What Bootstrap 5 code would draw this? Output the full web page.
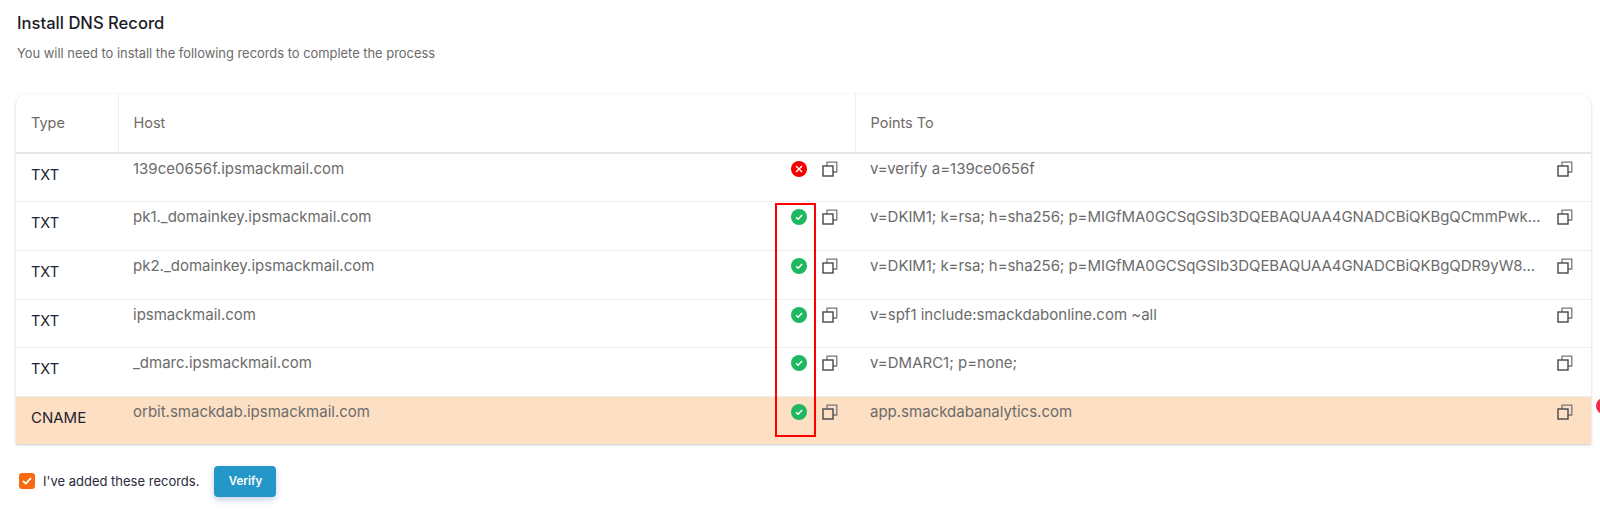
<!DOCTYPE html>
<html lang="en">
<head>
<meta charset="utf-8">
<title>Install DNS Record</title>
<link href="https://cdn.jsdelivr.net/npm/bootstrap@5.3.0/dist/css/bootstrap.min.css" rel="stylesheet">
<style>
html,body{height:525px;overflow:hidden;background:#fff}
body{font-family:"Inter","Liberation Sans",sans-serif;position:relative}
.dns-page{padding:13px 9px 0 16px}
.dns-title{font-size:16.6px;font-weight:500;color:#1b1b28;line-height:20px;margin:0 0 12px 1px}
.dns-sub{font-size:12.9px;color:#6b6b6b;line-height:18px;margin:0 0 31px 1px}
.dns-box{border-radius:12px 12px 0 0;box-shadow:0 1px 3px rgba(0,0,0,.22);overflow:hidden;background:#fff}
.dns-table{table-layout:fixed;margin:0;width:100%;font-size:14.5px}
.dns-table th{height:59px;font-weight:400;color:#6f6a66;padding:0 15px;vertical-align:middle;border-bottom:2px solid #e6e6e6;border-right:1px solid #eee}
.dns-table th:last-child{border-right:0}
.dns-table td{height:48.7px;padding:0 17px 0 15px;vertical-align:top;border-bottom:1px solid #eee;background:transparent;box-shadow:none}
.dns-table td:last-child{padding-right:18px}
.dns-type{color:#23232f;padding-top:10px!important}
.dns-cellin{display:flex;align-items:flex-start;height:100%;padding-top:5px}
.dns-val{flex:1 1 auto;min-width:0;color:#6b6b6b;white-space:nowrap;font-size:15px;line-height:20px}
.dns-long{letter-spacing:-.07px}
.dns-status{flex:none;width:16px;height:16px;margin:2px 15px 0 0}
.dns-copy{flex:none;width:16px;height:16px;margin-top:2px;color:#55555c}
.dns-copy2{margin-left:15px}
.dns-table .dns-hl td{background:#fddfc4;border-bottom:0;height:47.5px}
.dns-hl{--bs-table-bg:#fddfc4}
.dns-cname{font-size:15px}
.dns-foot{margin-top:22px;padding-left:3px;font-size:13px;color:#2a2a3a}
.dns-check{width:16px;height:16px;border-radius:3px;background:#f96a10;display:flex;align-items:center;justify-content:center}
.dns-btn{font-size:11.5px;font-weight:600;background:#2397c7;border:0;color:#fff;padding:0;width:62px;height:31px;border-radius:4px;box-shadow:0 3px 6px rgba(35,80,160,.25);margin-left:15px}
.dns-mark{position:absolute;left:775px;top:203px;width:41px;height:234px;border:2px solid #f00;pointer-events:none}
.dns-dot{position:absolute;left:1596px;top:398px;width:16px;height:16px;border-radius:50%;background:#ef2950}
</style>
</head>
<body>
<svg width="0" height="0" class="position-absolute">
<defs>
<symbol id="ic-copy" viewBox="0 0 16 16"><path d="M5 5V1.2h9.8V11H11" fill="none" stroke="#77777c" stroke-width="1.3"/><rect x="1" y="5" width="10" height="10" fill="none" stroke="#47474d" stroke-width="1.4"/></symbol>
<symbol id="ic-ok" viewBox="0 0 16 16"><circle cx="8" cy="8" r="8" fill="#1fb860"/><path d="M5 8.3l2.1 2 4-4.2" fill="none" stroke="#fff" stroke-width="1.5"/></symbol>
<symbol id="ic-bad" viewBox="0 0 16 16"><circle cx="8" cy="8" r="8" fill="#f40000"/><path d="M5 5l6 6M11 5l-6 6" fill="none" stroke="#fff" stroke-width="1.4"/></symbol>
</defs>
</svg>
<div class="dns-page">
<h1 class="dns-title">Install DNS Record</h1>
<p class="dns-sub">You will need to install the following records to complete the process</p>
<div class="dns-box">
<table class="table dns-table">
<colgroup><col style="width:102px"><col style="width:737px"><col></colgroup>
<thead><tr><th>Type</th><th>Host</th><th>Points To</th></tr></thead>
<tbody>
<tr><td class="dns-type">TXT</td><td><div class="dns-cellin"><span class="dns-val">139ce0656f.ipsmackmail.com</span><svg class="dns-status"><use href="#ic-bad"/></svg><svg class="dns-copy"><use href="#ic-copy"/></svg></div></td><td><div class="dns-cellin"><span class="dns-val">v=verify a=139ce0656f</span><svg class="dns-copy dns-copy2"><use href="#ic-copy"/></svg></div></td></tr>
<tr><td class="dns-type">TXT</td><td><div class="dns-cellin"><span class="dns-val">pk1._domainkey.ipsmackmail.com</span><svg class="dns-status"><use href="#ic-ok"/></svg><svg class="dns-copy"><use href="#ic-copy"/></svg></div></td><td><div class="dns-cellin"><span class="dns-val dns-long">v=DKIM1; k=rsa; h=sha256; p=MIGfMA0GCSqGSIb3DQEBAQUAA4GNADCBiQKBgQCmmPwk...</span><svg class="dns-copy dns-copy2"><use href="#ic-copy"/></svg></div></td></tr>
<tr><td class="dns-type">TXT</td><td><div class="dns-cellin"><span class="dns-val">pk2._domainkey.ipsmackmail.com</span><svg class="dns-status"><use href="#ic-ok"/></svg><svg class="dns-copy"><use href="#ic-copy"/></svg></div></td><td><div class="dns-cellin"><span class="dns-val dns-long">v=DKIM1; k=rsa; h=sha256; p=MIGfMA0GCSqGSIb3DQEBAQUAA4GNADCBiQKBgQDR9yW8...</span><svg class="dns-copy dns-copy2"><use href="#ic-copy"/></svg></div></td></tr>
<tr><td class="dns-type">TXT</td><td><div class="dns-cellin"><span class="dns-val">ipsmackmail.com</span><svg class="dns-status"><use href="#ic-ok"/></svg><svg class="dns-copy"><use href="#ic-copy"/></svg></div></td><td><div class="dns-cellin"><span class="dns-val">v=spf1 include:smackdabonline.com ~all</span><svg class="dns-copy dns-copy2"><use href="#ic-copy"/></svg></div></td></tr>
<tr><td class="dns-type">TXT</td><td><div class="dns-cellin"><span class="dns-val">_dmarc.ipsmackmail.com</span><svg class="dns-status"><use href="#ic-ok"/></svg><svg class="dns-copy"><use href="#ic-copy"/></svg></div></td><td><div class="dns-cellin"><span class="dns-val">v=DMARC1; p=none;</span><svg class="dns-copy dns-copy2"><use href="#ic-copy"/></svg></div></td></tr>
<tr class="dns-hl"><td class="dns-type dns-cname">CNAME</td><td><div class="dns-cellin"><span class="dns-val">orbit.smackdab.ipsmackmail.com</span><svg class="dns-status"><use href="#ic-ok"/></svg><svg class="dns-copy"><use href="#ic-copy"/></svg></div></td><td><div class="dns-cellin"><span class="dns-val">app.smackdabanalytics.com</span><svg class="dns-copy dns-copy2"><use href="#ic-copy"/></svg></div></td></tr>
</tbody>
</table>
</div>
<div class="d-flex align-items-center dns-foot">
<span class="dns-check"><svg width="10" height="8" viewBox="0 0 10 8"><path d="M1 4l2.8 2.6L9 1.2" fill="none" stroke="#fff" stroke-width="1.8"/></svg></span>
<span class="ms-2">I've added these records.</span>
<button type="button" class="btn dns-btn">Verify</button>
</div>
</div>
<div class="dns-mark"></div>
<div class="dns-dot"></div>
</body>
</html>
